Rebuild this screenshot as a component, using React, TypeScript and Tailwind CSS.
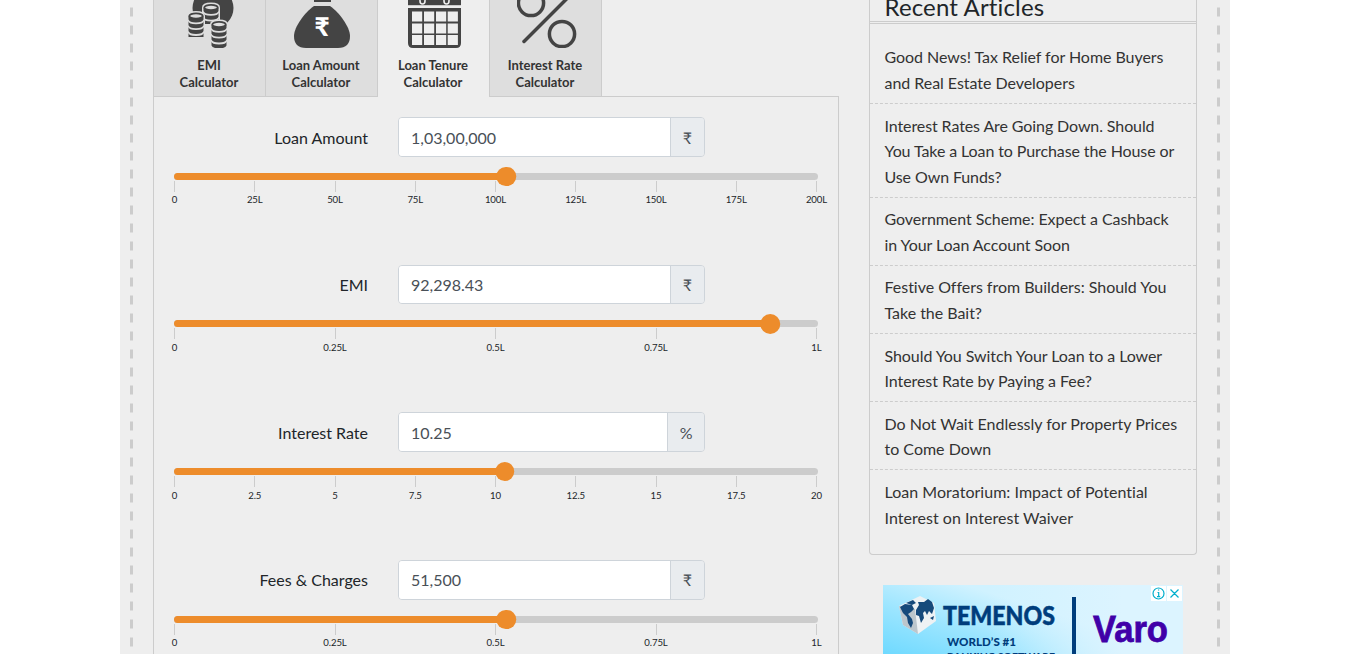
import React from "react";

const RupeeBag = () => (
  <svg width="56" height="48" viewBox="0 0 56 48">
    <path d="M20 0h17v2H20z" fill="#444" />
    <path d="M20 6H36C45 12 56 27 56 36Q56 48 44 48H12Q0 48 0 36C0 27 11 12 20 6Z" fill="#444" />
    <text x="28" y="36" textAnchor="middle" fontSize="26" fontWeight="900" fill="#fff" fontFamily="Lato, 'Noto Sans', 'DejaVu Sans', sans-serif">₹</text>
  </svg>
);

const CoinStack = ({ x, y, n }: { x: number; y: number; n: number }) => (
  <g transform={`translate(${x} ${y})`}>
    <path d={`M-1.5 3.5Q-1.5 -1.5 7.5 -1.5T16.5 3.5V${n * 5 + 6}H-1.5Z`} fill="#dedede" />
    {Array.from({ length: n }, (_, i) => (
      <path key={i} d={`M0 ${i * 5.8 + 3}Q0 ${i * 5.8 + 6} 7.5 ${i * 5.8 + 6}T15 ${i * 5.8 + 3}V${i * 5.8 + 7}Q14 ${i * 5.8 + 10} 7.5 ${i * 5.8 + 10}T0 ${i * 5.8 + 7}Z`} fill="#444" />
    ))}
    <ellipse cx="7.5" cy="3.5" rx="6.7" ry="2.6" fill="#dedede" stroke="#444" strokeWidth="1.8" />
  </g>
);

const Coins = () => (
  <svg width="56" height="48" viewBox="0 0 56 48">
    <circle cx="31" cy="8" r="20.5" fill="#444" />
    <path d="M6 15H38V30H6Z" fill="#dedede" />
    <CoinStack x={21.5} y={4} n={3} />
    <path d="M20 24H30V32H20Z" fill="#dedede" />
    <CoinStack x={6.5} y={12.5} n={4} />
    <path d="M5 37H23V40H5Z" fill="#dedede" />
    <CoinStack x={29.5} y={21} n={4} />
  </svg>
);

const Calendar = () => (
  <svg width="53" height="48" viewBox="0 0 53 48">
    <path d="M0 0H53V5H0ZM0 8H53V43Q53 48 48 48H5Q0 48 0 43Z" fill="#444" />
    <path d="M0 5.5H53V6H0Z" fill="#aaa" />
    {[11.5, 23.5, 35].map((y) => [4, 16, 28, 39.7].map((x) => <path key={`${x}-${y}`} d={`M${x} ${y}h10.2v10h-10.2z`} fill="#eee" />))}
    <path d="M12 0V1Q12 4 14.5 4T17 1V0M36 0V1Q36 4 38.5 4T41 1V0" fill="none" stroke="#eee" strokeWidth="1.6" />
  </svg>
);

const Percent = () => (
  <svg width="60" height="48" viewBox="0 0 60 48" fill="none" stroke="#444" strokeWidth="3.5" strokeLinecap="round">
    <circle cx="14" cy="3" r="12.6" />
    <circle cx="45" cy="34" r="12.6" />
    <path d="M7 41.5L50 -1.5" />
  </svg>
);

const tabs = [
  { title: "EMI", icon: <Coins />, on: false },
  { title: "Loan Amount", icon: <RupeeBag />, on: false },
  { title: "Loan Tenure", icon: <Calendar />, on: true },
  { title: "Interest Rate", icon: <Percent />, on: false },
];

const sliders = [
  { label: "Loan Amount", value: "1,03,00,000", unit: "₹", pos: 51.6, ticks: ["0", "25L", "50L", "75L", "100L", "125L", "150L", "175L", "200L"] },
  { label: "EMI", value: "92,298.43", unit: "₹", pos: 92.6, ticks: ["0", "0.25L", "0.5L", "0.75L", "1L"] },
  { label: "Interest Rate", value: "10.25", unit: "%", pos: 51.35, ticks: ["0", "2.5", "5", "7.5", "10", "12.5", "15", "17.5", "20"] },
  { label: "Fees & Charges", value: "51,500", unit: "₹", pos: 51.6, ticks: ["0", "0.25L", "0.5L", "0.75L", "1L"] },
];

const articles: { lines: string[]; tracking: string }[] = [
  { lines: ["Good News! Tax Relief for Home Buyers", "and Real Estate Developers"], tracking: "tracking-[-0.04px]" },
  { lines: ["Interest Rates Are Going Down. Should", "You Take a Loan to Purchase the House or", "Use Own Funds?"], tracking: "tracking-[-0.1px]" },
  { lines: ["Government Scheme: Expect a Cashback", "in Your Loan Account Soon"], tracking: "tracking-[-0.07px]" },
  { lines: ["Festive Offers from Builders: Should You", "Take the Bait?"], tracking: "tracking-[-0.03px]" },
  { lines: ["Should You Switch Your Loan to a Lower", "Interest Rate by Paying a Fee?"], tracking: "tracking-[-0.07px]" },
  { lines: ["Do Not Wait Endlessly for Property Prices", "to Come Down"], tracking: "tracking-normal" },
  { lines: ["Loan Moratorium: Impact of Potential", "Interest on Interest Waiver"], tracking: "tracking-[0.03px]" },
];

const Rail = () => (
  <div className="h-full w-[3px] shrink-0 bg-[repeating-linear-gradient(to_bottom,transparent_0px,transparent_7px,#ddd_7px,#ddd_8px,#ccc_8px,#ccc_16px,#ddd_16px,#ddd_17px,transparent_17px,transparent_18px)]" />
);

function SliderRow({ s }: { s: (typeof sliders)[number] }) {
  return (
    <div className="h-[147.6px] shrink-0">
      <div className="flex h-[39.8px] items-center">
        <div className="w-[194px] pt-[1.3px] text-right">{s.label}</div>
        <div className="ml-[30px] flex h-full w-[307px] overflow-hidden rounded border border-[#ced4da] text-[#495057]">
          <div className="flex flex-1 items-center bg-white pl-3 pt-[1.3px]">{s.value}</div>
          <div className={`flex items-center border-l border-[#ced4da] bg-[#e9ecef] pt-[1.3px] ${s.unit === "%" ? "px-[11.5px]" : "px-3"}`}>{s.unit}</div>
        </div>
      </div>
      <div className="relative mt-4 h-[7px] w-[644px] rounded-full bg-[#ccc]">
        <div className="h-full rounded-full bg-[#ed8c2b]" style={{ width: `${s.pos}%` }} />
        <div className="absolute top-[-6px] size-[19.5px] -translate-x-1/2 rounded-full bg-[#ed8c2b]" style={{ left: `${s.pos}%` }} />
      </div>
      <div className="mt-px flex w-[643px] justify-between">
        {s.ticks.map((t) => (
          <div key={t} className="flex w-px flex-col items-center">
            <div className="h-[11px] w-px bg-[#ccc]" />
            <div className="mt-[1.6px] whitespace-nowrap text-[9.6px] leading-[14px] tracking-[-0.1px]">{t}</div>
          </div>
        ))}
      </div>
    </div>
  );
}

function Ad() {
  return (
    <div className="relative ml-[14px] mt-[30px] h-[250px] w-[300px] overflow-hidden bg-[#8fe0ff]">
      <svg width="300" height="69" viewBox="0 0 300 69">
        <defs>
          <linearGradient id="sky" gradientUnits="userSpaceOnUse" x1="20" y1="85" x2="50" y2="-10">
            <stop offset="0" stopColor="#66d7ff" />
            <stop offset=".55" stopColor="#9be5ff" />
            <stop offset="1" stopColor="#d0f2ff" />
          </linearGradient>
          <linearGradient id="haze">
            <stop offset=".35" stopColor="#dcf4ff" stopOpacity="0" />
            <stop offset=".8" stopColor="#dcf4ff" />
          </linearGradient>
        </defs>
        <path d="M0 0H300V69H0Z" fill="url(#sky)" />
        <path d="M0 0H300V69H0Z" fill="url(#haze)" />
        <path d="M16 21L37 11L51 18L53 36L35 49L20 40Z" fill="#eef2f4" />
        <path d="M16 21L32 24L35 49L20 40Z" fill="#bcc6cc" />
        <path d="M17 22L22 19L29 20L31 24L28 27L25 29L29 34L30 38L28 43L25 38L24 32L20 28ZM23 18L30 15L33 18L29 20ZM33 25L36 20L35 17L41 17L45 14L49 17L51 23L49 29L46 26L44 30L42 26L40 28L41 33L38 38L36 31L33 30ZM47 33L51 31L50 35Z" fill="#164a7b" />
        <text x="60" y="40" textLength="112" lengthAdjust="spacingAndGlyphs" fontFamily="Lato, sans-serif" fontWeight="900" fontSize="26" stroke="#003d7c" strokeWidth=".5" fill="#003d7c">TEMENOS</text>
        <text x="64" y="61" textLength="69" lengthAdjust="spacingAndGlyphs" fontFamily="Lato, sans-serif" fontWeight="900" fontSize="11" fill="#003d7c">WORLD’S #1</text>
        <text x="64" y="75.5" textLength="108" lengthAdjust="spacingAndGlyphs" fontFamily="Lato, sans-serif" fontWeight="900" fontSize="11" fill="#003d7c">BANKING SOFTWARE</text>
        <path d="M189 12h4v57h-4z" fill="#003d7c" />
        <text x="210" y="57" textLength="75" lengthAdjust="spacingAndGlyphs" fontFamily="'Liberation Sans', sans-serif" fontWeight="700" fontSize="37" stroke="#4000a8" strokeWidth=".8" fill="#4000a8">Varo</text>
        <path d="M268 1h31v15h-31z" fill="#fff" />
        <path d="M283 1h1v15h-1z" fill="#dcf4ff" />
        <g fill="none" stroke="#00aecd" strokeWidth="1.2">
          <circle cx="275.5" cy="8.5" r="5.5" />
          <path d="M274.5 7.5h1.2v4.2M274 11.7h3.2M275 5h1.2M287.5 4.5l8 8M295.5 4.5l-8 8" />
        </g>
      </svg>
    </div>
  );
}

export default function App() {
  return (
    <div className="flex h-[654px] justify-center overflow-hidden bg-white pr-4 font-['Lato','Noto_Sans',sans-serif] text-[16px] text-[#212529] [font-variant-ligatures:none]">
      <div className="flex h-full w-[1110px] bg-[#eee] pl-[10px]">
        <Rail />
        <main className="ml-5 flex w-[686px] shrink-0 flex-col">
          <div className="flex h-[97px] shrink-0">
            {tabs.map((t, i) => (
              <div
                key={t.title}
                className={`flex h-[97px] shrink-0 flex-col items-center border-[#ccc] text-center text-[13px] font-bold leading-[17px] text-[#333] ${i === 0 ? "w-[113px] border-l" : "w-[112px]"} ${t.on ? "bg-[#eee]" : "border-b bg-[#dedede]"} border-r`}
              >
                <div className={i === 3 ? "pl-[3px]" : i === 2 ? "pl-[1.5px]" : ""}>{t.icon}</div>
                <div className="mt-[9px] pr-px">
                  {t.title}
                  <br />
                  Calculator
                </div>
              </div>
            ))}
            <div className="flex-1 border-b border-[#ccc]" />
          </div>
          <div className="flex flex-1 flex-col overflow-hidden border-x border-[#ccc] pl-5 pt-5">
            {sliders.map((s) => (
              <SliderRow key={s.label} s={s} />
            ))}
          </div>
        </main>
        <aside className="ml-[30px] w-[328px] shrink-0">
          <div className="h-[555px] rounded-b border border-t-0 border-[#ccc]">
            <div className="flex h-6 items-end border-b-[3px] border-double border-[#ccc] pl-[14.5px]">
              <h2 className="text-[24px] leading-[28px] tracking-[0.15px]">Recent Articles</h2>
            </div>
            <ul className="pt-[11.7px]">
              {articles.map((a, i) => (
                <li key={a.lines[0]} className={`whitespace-nowrap pb-[7.3px] pl-[14.5px] pt-[8.7px] leading-[25.6px] text-[#333] ${a.tracking} ${i < articles.length - 1 ? "border-b border-dashed border-[#ccc]" : ""}`}>
                  {a.lines.map((l) => (
                    <div key={l}>{l}</div>
                  ))}
                </li>
              ))}
            </ul>
          </div>
          <Ad />
        </aside>
        <div className="ml-5 h-full">
          <Rail />
        </div>
      </div>
    </div>
  );
}
